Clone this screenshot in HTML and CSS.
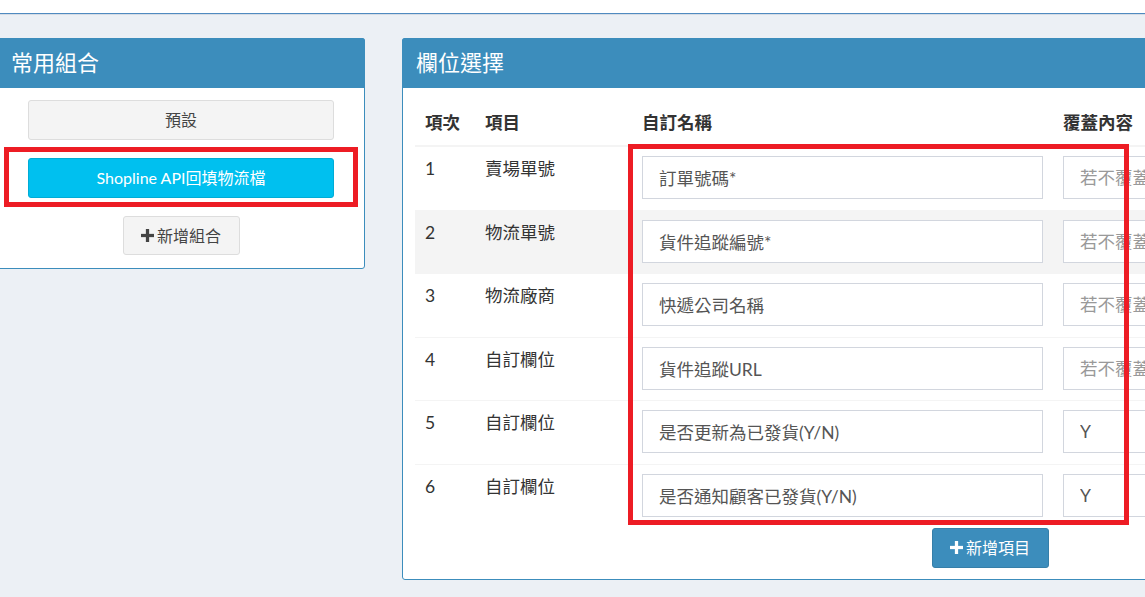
FILE: index.html
```html
<!DOCTYPE html>
<html lang="zh-Hant">
<head>
<meta charset="utf-8">
<title>欄位選擇</title>
<link rel="stylesheet" href="styles.css">
</head>
<body>
<div class="page">
  <div class="topbar"></div>
  <div class="main">
    <section class="box box-left">
      <div class="box-header"><h3 class="box-title">常用組合</h3></div>
      <div class="box-body left-body">
        <button class="btn btn-default btn-block">預設</button>
        <button class="btn btn-info btn-block">Shopline API回填物流檔</button>
        <button class="btn btn-default btn-add">
          <svg class="plus" viewBox="0 0 12 12" aria-hidden="true"><rect x="4.5" y="0" width="3" height="12"/><rect x="0" y="4.5" width="12" height="3"/></svg>新增組合
        </button>
      </div>
    </section>

    <section class="box box-right">
      <div class="box-header"><h3 class="box-title">欄位選擇</h3></div>
      <div class="box-body right-body">
        <table class="fields">
          <colgroup>
            <col class="c1"><col class="c2"><col class="c3"><col class="c4">
          </colgroup>
          <thead>
            <tr><th>項次</th><th>項目</th><th>自訂名稱</th><th>覆蓋內容</th></tr>
          </thead>
          <tbody>
            <tr><td>1</td><td>賣場單號</td><td><input class="field" value="訂單號碼*"></td><td><input class="field" placeholder="若不覆蓋請留空"></td></tr>
            <tr class="striped"><td>2</td><td>物流單號</td><td><input class="field" value="貨件追蹤編號*"></td><td><input class="field" placeholder="若不覆蓋請留空"></td></tr>
            <tr><td>3</td><td>物流廠商</td><td><input class="field" value="快遞公司名稱"></td><td><input class="field" placeholder="若不覆蓋請留空"></td></tr>
            <tr><td>4</td><td>自訂欄位</td><td><input class="field" value="貨件追蹤URL"></td><td><input class="field" placeholder="若不覆蓋請留空"></td></tr>
            <tr><td>5</td><td>自訂欄位</td><td><input class="field" value="是否更新為已發貨(Y/N)"></td><td><input class="field" value="Y"></td></tr>
            <tr><td>6</td><td>自訂欄位</td><td><input class="field" value="是否通知顧客已發貨(Y/N)"></td><td><input class="field" value="Y"></td></tr>
          </tbody>
        </table>
        <div class="add-row">
          <button class="btn btn-primary btn-add">
            <svg class="plus" viewBox="0 0 12 12" aria-hidden="true"><rect x="4.5" y="0" width="3" height="12"/><rect x="0" y="4.5" width="12" height="3"/></svg>新增項目
          </button>
        </div>
      </div>
    </section>
  </div>

  <div class="mark mark-left"></div>
  <div class="mark mark-right"></div>
</div>
</body>
</html>
```

FILE: styles.css
```css
html, body {
  margin: 0;
  padding: 0;
}

body {
  background: #ecf0f5;
  overflow: hidden;
  width: 1145px;
  height: 597px;
  font-family: "Lato", "Noto Sans CJK TC", sans-serif;
  color: #333;
}

.page {
  position: relative;
  width: 1145px;
  height: 597px;
  overflow: hidden;
}

.topbar {
  height: 13px;
  background: #fff;
  border-bottom: 1px solid #4f8ac0;
  box-shadow: 0 1px 0 #d5dce5;
}

.main {
  display: flex;
  align-items: flex-start;
  gap: 37px;
  padding-top: 24px;
  margin-left: -3px;
}

.box {
  flex: none;
  background: #fff;
  border: 1px solid #3c8dbc;
  border-radius: 3px;
  box-sizing: border-box;
}

.box-left { width: 368px; }
.box-right { width: 1176px; }

.box-header {
  background: #3c8dbc;
  height: 50px;
  display: flex;
  align-items: center;
  padding-left: 14px;
  margin: -1px -1px 0 -1px;
  border-radius: 3px 3px 0 0;
}

.box-title {
  margin: 0;
  font-weight: normal;
  font-size: 22px;
  color: #fff;
  line-height: 1;
}

.left-body {
  display: flex;
  flex-direction: column;
  align-items: center;
  padding: 12px 30px 13px;
}

.btn {
  font-family: "Lato", "Noto Sans CJK TC", sans-serif;
  font-size: 16px;
  border-radius: 3px;
  border: 1px solid #ddd;
  background: #f4f4f4;
  color: #444;
  box-sizing: border-box;
  cursor: pointer;
  display: inline-flex;
  align-items: center;
  justify-content: center;
  padding: 0 12px;
  line-height: 1;
}

.btn-block {
  width: 100%;
  height: 40px;
}

.btn-info {
  background: #00c0ef;
  border-color: #00acd6;
  color: #fff;
  margin-top: 18px;
}

.btn-add {
  width: 117px;
  height: 39px;
  gap: 3px;
  padding: 0 10px;
}

.box-left .btn-add { margin-top: 18px; }

.plus {
  width: 13px;
  height: 13px;
  fill: #444;
  flex: none;
}

.btn-primary {
  background: #3c8dbc;
  border-color: #367fa9;
  color: #fff;
}

.btn-primary .plus { fill: #fff; }

.right-body {
  padding: 12px 12px 11px;
}

.fields {
  width: 1150px;
  border-collapse: collapse;
  table-layout: fixed;
  font-size: 17.5px;
}

.c1 { width: 60px; }
.c2 { width: 157px; }
.c3 { width: 421px; }

.fields th,
.fields td {
  text-align: left;
  vertical-align: top;
  padding: 10px 10px;
  line-height: 25px;
}

.fields th {
  font-weight: bold;
  border-bottom: 2px solid #f4f4f4;
  padding-bottom: 10px;
}

.fields td {
  border-top: 1px solid #f4f4f4;
  padding-top: 9px;
  padding-bottom: 10.6px;
}

.fields tr.striped td { background: #f4f4f4; }

.field {
  display: block;
  width: 100%;
  height: 43px;
  box-sizing: border-box;
  border: 1px solid #d2d6de;
  background: #fff;
  padding: 0 16px;
  font-family: "Lato", "Noto Sans CJK TC", sans-serif;
  font-size: 17.5px;
  color: #555;
  outline: none;
}

.field::placeholder { color: #999; }

.add-row {
  display: flex;
  justify-content: center;
  width: 1150px;
}

.add-row .btn-add { height: 40px; }

.mark {
  position: absolute;
  border: 5px solid #ed1c24;
  box-sizing: border-box;
  pointer-events: none;
}

.mark-left {
  left: 4px;
  top: 147px;
  width: 354px;
  height: 60px;
}

.mark-right {
  left: 628px;
  top: 144px;
  width: 501px;
  height: 381px;
}
```
